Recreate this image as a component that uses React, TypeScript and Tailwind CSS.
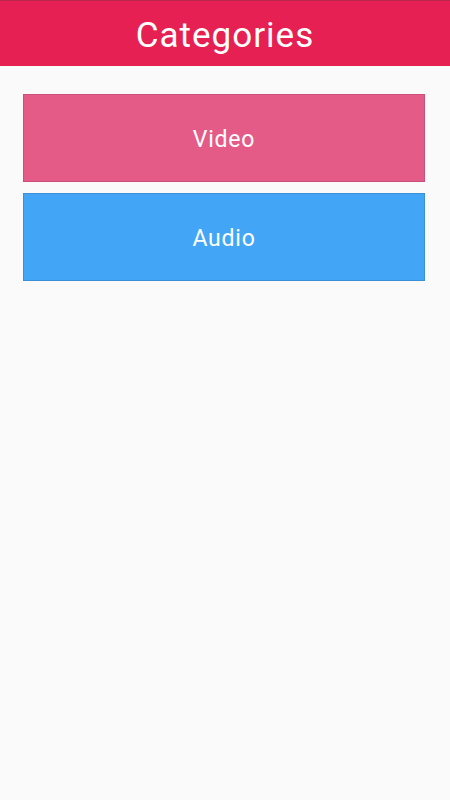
export default function App() {
  const categories = [
    { name: 'Video', className: 'bg-[#e55b88] border-[#c95078]' },
    { name: 'Audio', className: 'bg-[#42a5f5] border-[#3b8fd4]' },
  ];

  return (
    <div className="min-h-[800px] bg-[#fafafa] font-['Roboto',sans-serif]">
      <header className="h-[66px] pt-[3px] bg-[#e62052] border-t border-[#b8284d] flex items-center justify-center">
        <h1 className="text-white text-[35px] leading-none tracking-[1px]">Categories</h1>
      </header>
      <div className="pl-[23px] pr-[25px] pt-[28px] flex flex-col gap-[11px]">
        {categories.map((cat) => (
          <div
            key={cat.name}
            className={`h-[88px] pt-[4px] border flex items-center justify-center ${cat.className}`}
          >
            <span className="text-white text-[23px] tracking-[0.8px]">{cat.name}</span>
          </div>
        ))}
      </div>
    </div>
  );
}
